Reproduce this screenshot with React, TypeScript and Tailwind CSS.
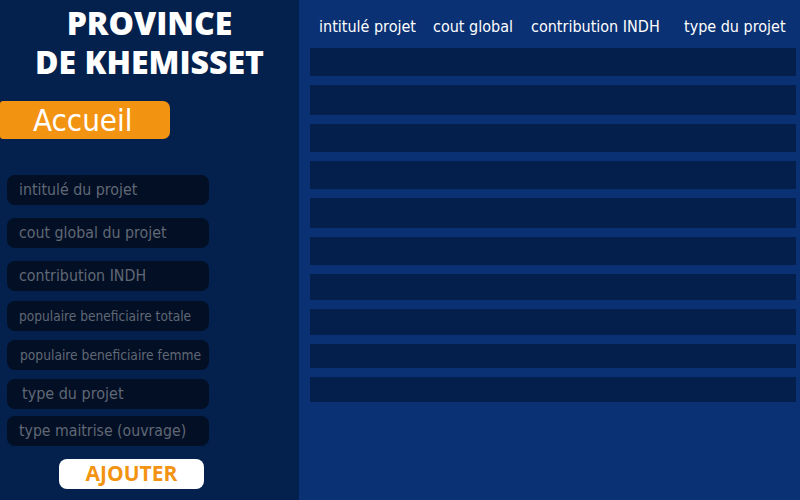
import React from "react";

const FIELDS = [
  { label: "intitulé du projet", text: "text-[15.8px]", pl: "pl-[12px]", mt: "mt-[36px]" },
  { label: "cout global du projet", text: "text-[15.8px]", pl: "pl-[12px]", mt: "mt-[13px]" },
  { label: "contribution INDH", text: "text-[15.8px]", pl: "pl-[12px]", mt: "mt-[13px]" },
  { label: "populaire beneficiaire totale", text: "text-[13.6px]", pl: "pl-[12px]", mt: "mt-[10px]" },
  { label: "populaire beneficiaire femme", text: "text-[13.7px]", pl: "pl-[13px]", mt: "mt-[9px]" },
  { label: "type du projet", text: "text-[16px]", pl: "pl-[15px]", mt: "mt-[9px]" },
  { label: "type maitrise (ouvrage)", text: "text-[15.7px]", pl: "pl-[12px]", mt: "mt-[7px]" },
];

const ROW_HEIGHTS = [28, 30, 28, 28, 30, 28, 26, 26, 24, 25];

export default function App() {
  return (
    <div className="flex h-[500px] w-[800px] overflow-hidden font-['DejaVu_Sans_Condensed',Tahoma,sans-serif]">
      {/* Sidebar */}
      <aside className="flex w-[299px] shrink-0 flex-col bg-[#04204d]">
        <h1 className="pt-[3px] text-center font-['Open_Sans',sans-serif] text-[32px] font-extrabold leading-[39px] text-white">
          PROVINCE
          <br />
          DE KHEMISSET
        </h1>
        <button className="mt-[20px] flex h-[38px] w-[170px] items-center rounded-r-[7px] rounded-l-[3px] bg-[#f39312] pl-[33px] text-[31px] leading-none text-white">
          Accueil
        </button>

        {FIELDS.map((f) => (
          <div
            key={f.label}
            className={`${f.mt} ml-[7px] flex h-[30px] w-[202px] items-center rounded-[8px] bg-[#030f25] ${f.pl} ${f.text} text-[#606875]`}
          >
            {f.label}
          </div>
        ))}

        <button className="ml-[59px] mt-[13px] flex h-[30px] w-[145px] items-center justify-center rounded-[8px] bg-white pb-[1px] font-['Open_Sans',sans-serif] text-[21px] font-bold text-[#f39312]">
          AJOUTER
        </button>
      </aside>

      {/* Main */}
      <main className="flex flex-1 flex-col bg-[#0a3173] pl-[11px] pr-[4px]">
        <div className="flex h-[48px] pl-[9px] pt-[17px] text-[16px] leading-[19px] text-white">
          <span className="w-[114px]">intitulé projet</span>
          <span className="w-[98px]">cout global</span>
          <span className="w-[153px]">contribution INDH</span>
          <span>type du projet</span>
        </div>
        <div className="flex flex-col gap-[9px]">
          {ROW_HEIGHTS.map((h, i) => (
            <div key={i} className="bg-[#041f4b]" style={{ height: h }} />
          ))}
        </div>
      </main>
    </div>
  );
}
